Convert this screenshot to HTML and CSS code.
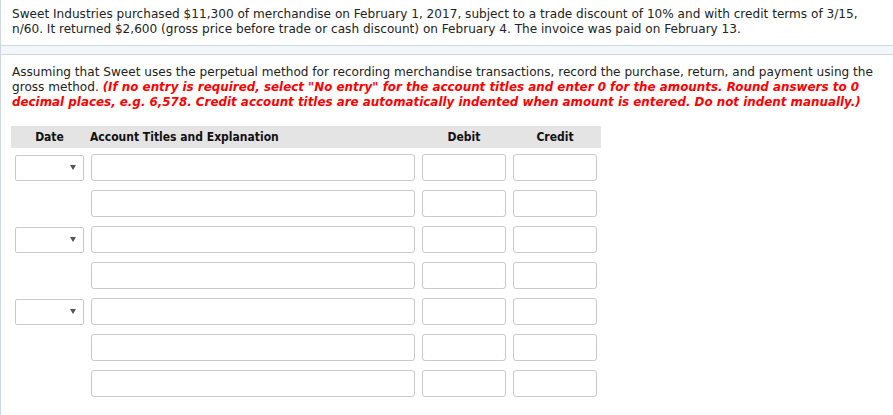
FILE: index.html
```html
<!DOCTYPE html>
<html>
<head>
<meta charset="utf-8">
<link rel="stylesheet" href="styles.css">
</head>
<body>
<div class="page">
  <div class="panel panel-top">
    <p class="text">Sweet Industries purchased $11,300 of merchandise on February 1, 2017, subject to a trade discount of 10% and with credit terms of 3/15, n/60. It returned $2,600 (gross price before trade or cash discount) on February 4. The invoice was paid on February 13.</p>
  </div>
  <div class="gap"></div>
  <div class="panel panel-main">
    <p class="text">Assuming that Sweet uses the perpetual method for recording merchandise transactions, record the purchase, return, and payment using the gross method. <em class="note">(If no entry is required, select "No entry" for the account titles and enter 0 for the amounts. Round answers to 0 decimal places, e.g. 6,578. Credit account titles are automatically indented when amount is entered. Do not indent manually.)</em></p>
    <div class="journal">
      <div class="head">
        <div class="h-date">Date</div>
        <div class="h-acct">Account Titles and Explanation</div>
        <div class="h-num">Debit</div>
        <div class="h-num">Credit</div>
      </div>
      <div class="row">
        <div class="c-date"><div class="select"><span class="arrow"></span></div></div>
        <div class="field"></div><div class="field"></div><div class="field"></div>
      </div>
      <div class="row">
        <div class="c-date"></div>
        <div class="field"></div><div class="field"></div><div class="field"></div>
      </div>
      <div class="row">
        <div class="c-date"><div class="select"><span class="arrow"></span></div></div>
        <div class="field"></div><div class="field"></div><div class="field"></div>
      </div>
      <div class="row">
        <div class="c-date"></div>
        <div class="field"></div><div class="field"></div><div class="field"></div>
      </div>
      <div class="row">
        <div class="c-date"><div class="select"><span class="arrow"></span></div></div>
        <div class="field"></div><div class="field"></div><div class="field"></div>
      </div>
      <div class="row">
        <div class="c-date"></div>
        <div class="field"></div><div class="field"></div><div class="field"></div>
      </div>
      <div class="row">
        <div class="c-date"></div>
        <div class="field"></div><div class="field"></div><div class="field"></div>
      </div>
    </div>
  </div>
</div>
</body>
</html>
```
FILE: styles.css
```css
html, body {
  margin: 0;
  padding: 0;
  background: #fff;
}
.page {
  width: 893px;
  height: 415px;
  overflow: hidden;
  font-family: "DejaVu Sans", Verdana, sans-serif;
  font-size: 12.1px;
  color: #222;
}
.panel {
  border-left: 1px solid #cfd6e3;
  background: #fff;
}
.panel-top {
  border-bottom: 1px solid #cfd6e3;
  padding: 7px 11px 8px 11px;
  height: 30px;
}
.gap {
  height: 8px;
  background: #f3f6fa;
  border-left: 1px solid #cfd6e3;
}
.panel-main {
  border-top: 1px solid #cfd6e3;
  padding: 10px 11px 0 11px;
  height: 400px;
}
.text {
  margin: 0;
  line-height: 15px;
}
.note {
  color: #ff0000;
  font-weight: bold;
  font-style: italic;
  font-size: 11.9px;
  line-height: 15px;
}
.journal {
  margin-top: 16px;
  margin-left: -1px;
  width: 590px;
}
.head,
.row {
  display: grid;
  grid-template-columns: 69px 324px 84px 84px;
  column-gap: 7px;
  padding-left: 4px;
  align-items: center;
}
.head {
  height: 22px;
  background: #e4e4e4;
  font-family: "DejaVu Sans Condensed", "DejaVu Sans", sans-serif;
  font-weight: bold;
  font-size: 12px;
  color: #111;
}
.h-date,
.h-num {
  text-align: center;
}
.h-acct {
  margin-left: -1px;
}
.row {
  margin-top: 9px;
}
.head + .row {
  margin-top: 6px;
}
.select {
  box-sizing: border-box;
  width: 69px;
  height: 26px;
  border: 1px solid #c9c9c9;
  border-radius: 2px;
  background: #fff;
  display: flex;
  align-items: center;
  justify-content: flex-end;
  padding-right: 7px;
}
.arrow {
  width: 0;
  height: 0;
  border-left: 3px solid transparent;
  border-right: 3px solid transparent;
  border-top: 5px solid #555;
}
.field {
  box-sizing: border-box;
  height: 27px;
  border: 1px solid #c9c9c9;
  border-radius: 3px;
  background: #fff;
}
```
